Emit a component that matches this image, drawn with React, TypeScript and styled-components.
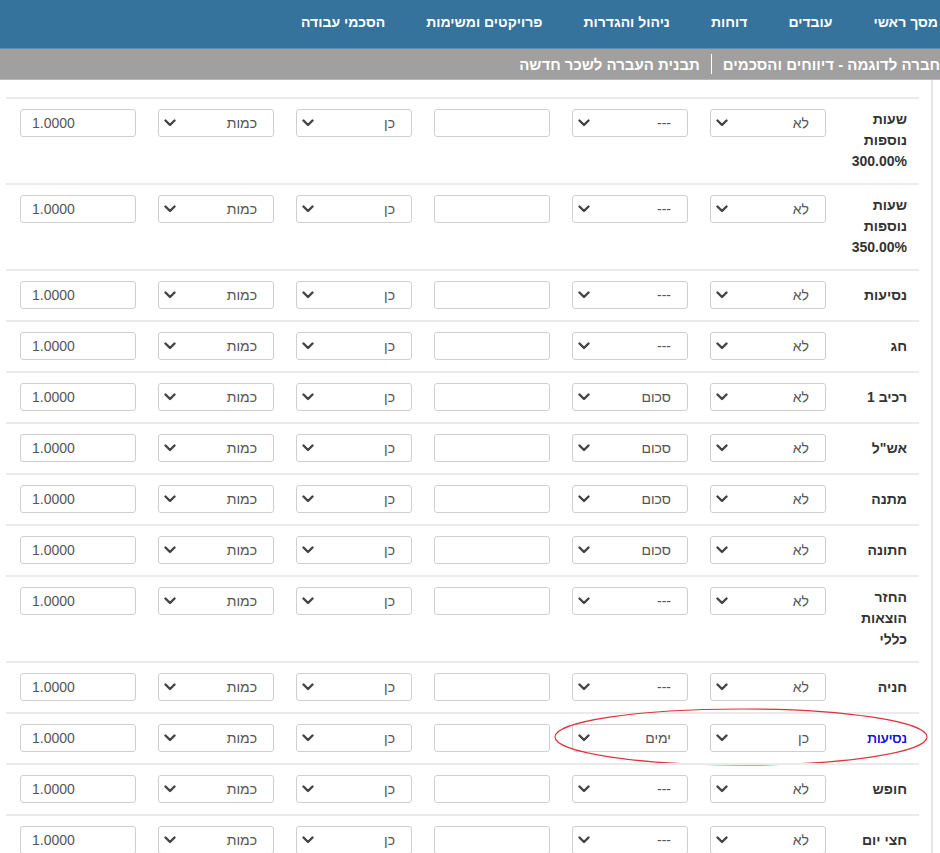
import React from "react";
import styled, { createGlobalStyle } from "styled-components";

const GlobalStyle = createGlobalStyle`
  html, body {
    margin: 0;
    padding: 0;
    overflow: hidden;
    background: #ffffff;
    font-family: "Liberation Sans", Arial, "DejaVu Sans", sans-serif;
  }
  * { box-sizing: border-box; }
`;

const Page = styled.div`
  direction: rtl;
  width: 940px;
`;

const NavBar = styled.nav`
  height: 49px;
  background: #35739c;
  display: flex;
  align-items: center;
  gap: 41px;
  padding: 0 2px 5px 0;
  border-bottom: 1px solid #5d8db0;
`;

const NavItem = styled.a`
  color: #ffffff;
  font-weight: bold;
  font-size: 14px;
  white-space: nowrap;
`;

const SubBar = styled.div`
  height: 31px;
  background: #a0a0a0;
  display: flex;
  align-items: center;
  gap: 11px;
  color: #ffffff;
  font-weight: bold;
  font-size: 15px;
  white-space: nowrap;
  overflow: hidden;
  border-bottom: 1px solid #b8b8b8;
`;

const SubSep = styled.span`
  flex: none;
  width: 1px;
  height: 20px;
  background: #ffffff;
`;

const Wrapper = styled.div`
  display: flex;
  justify-content: flex-start;
`;

const Frame = styled.div`
  width: 933px;
  border-right: 2px solid #e6e6e6;
  margin-right: 7px;
`;

const Content = styled.div`
  padding: 17px 12px 0 6px;
`;

const Row = styled.div`
  position: relative;
  display: flex;
  align-items: flex-start;
  border-top: 2px solid #ebebeb;
  padding: 10px 12px 11px 12px;
`;

const Label = styled.div<{ $link?: boolean }>`
  width: 70px;
  margin-left: 11px;
  align-self: center;
  font-size: 14px;
  line-height: 21px;
  color: ${(p) => (p.$link ? "#1515e6" : "#333333")};
  font-weight: ${(p) => (p.$link ? "normal" : "bold")};
  text-shadow: ${(p) => (p.$link ? "0 0 0.4px #1515e6" : "none")};
`;

const Controls = styled.div`
  display: flex;
  gap: 22px;
`;

const SelectBox = styled.div`
  width: 116px;
  height: 28px;
  border: 1px solid #cfcfcf;
  border-radius: 3px;
  background: #fff;
  display: flex;
  align-items: center;
  justify-content: space-between;
  padding: 0 16px 0 5px;
  font-size: 14px;
  color: #555555;
`;

const TextBox = styled.div`
  width: 116px;
  height: 28px;
  border: 1px solid #cfcfcf;
  border-radius: 3px;
  background: #fff;
  display: flex;
  align-items: center;
  direction: ltr;
  padding: 0 11px;
  font-size: 14px;
  color: #555555;
`;

const Chevron = () => (
  <svg width="12" height="8" viewBox="0 0 12 8">
    <polyline
      points="1.5,1.5 6,6 10.5,1.5"
      fill="none"
      stroke="#444"
      strokeWidth="2.4"
      strokeLinecap="round"
      strokeLinejoin="round"
    />
  </svg>
);

const Select = ({ value }: { value: string }) => (
  <SelectBox>
    <span>{value}</span>
    <Chevron />
  </SelectBox>
);

const Ellipse = styled.svg`
  position: absolute;
  left: 547px;
  top: -7px;
  pointer-events: none;
`;

type RowData = {
  label: string;
  a: string;
  b: string;
  link?: boolean;
  circled?: boolean;
};

const rows: RowData[] = [
  { label: "שעות נוספות 300.00%", a: "לא", b: "---" },
  { label: "שעות נוספות 350.00%", a: "לא", b: "---" },
  { label: "נסיעות", a: "לא", b: "---" },
  { label: "חג", a: "לא", b: "---" },
  { label: "רכיב 1", a: "לא", b: "סכום" },
  { label: 'אש"ל', a: "לא", b: "סכום" },
  { label: "מתנה", a: "לא", b: "סכום" },
  { label: "חתונה", a: "לא", b: "סכום" },
  { label: "החזר הוצאות כללי", a: "לא", b: "---" },
  { label: "חניה", a: "לא", b: "---" },
  { label: "נסיעות", a: "כן", b: "ימים", link: true, circled: true },
  { label: "חופש", a: "לא", b: "---" },
  { label: "חצי יום", a: "לא", b: "---" },
];

export default function App() {
  return (
    <Page>
      <GlobalStyle />
      <NavBar>
        <NavItem>מסך ראשי</NavItem>
        <NavItem>עובדים</NavItem>
        <NavItem>דוחות</NavItem>
        <NavItem>ניהול והגדרות</NavItem>
        <NavItem>פרויקטים ומשימות</NavItem>
        <NavItem>הסכמי עבודה</NavItem>
      </NavBar>
      <SubBar>
        <span>חברה לדוגמה - דיווחים והסכמים</span>
        <SubSep />
        <span>תבנית העברה לשכר חדשה</span>
      </SubBar>
      <Wrapper>
        <Frame>
          <Content>
            {rows.map((r, i) => (
              <Row key={i}>
                <Label $link={r.link}>{r.label}</Label>
                <Controls>
                  <Select value={r.a} />
                  <Select value={r.b} />
                  <TextBox />
                  <Select value="כן" />
                  <Select value="כמות" />
                  <TextBox>1.0000</TextBox>
                </Controls>
                {r.circled && (
                  <Ellipse width="376" height="60" viewBox="0 0 376 60">
                    <ellipse
                      cx="188"
                      cy="30"
                      rx="186"
                      ry="28"
                      fill="none"
                      stroke="#e0323c"
                      strokeWidth="1.2"
                    />
                  </Ellipse>
                )}
              </Row>
            ))}
          </Content>
        </Frame>
      </Wrapper>
    </Page>
  );
}
